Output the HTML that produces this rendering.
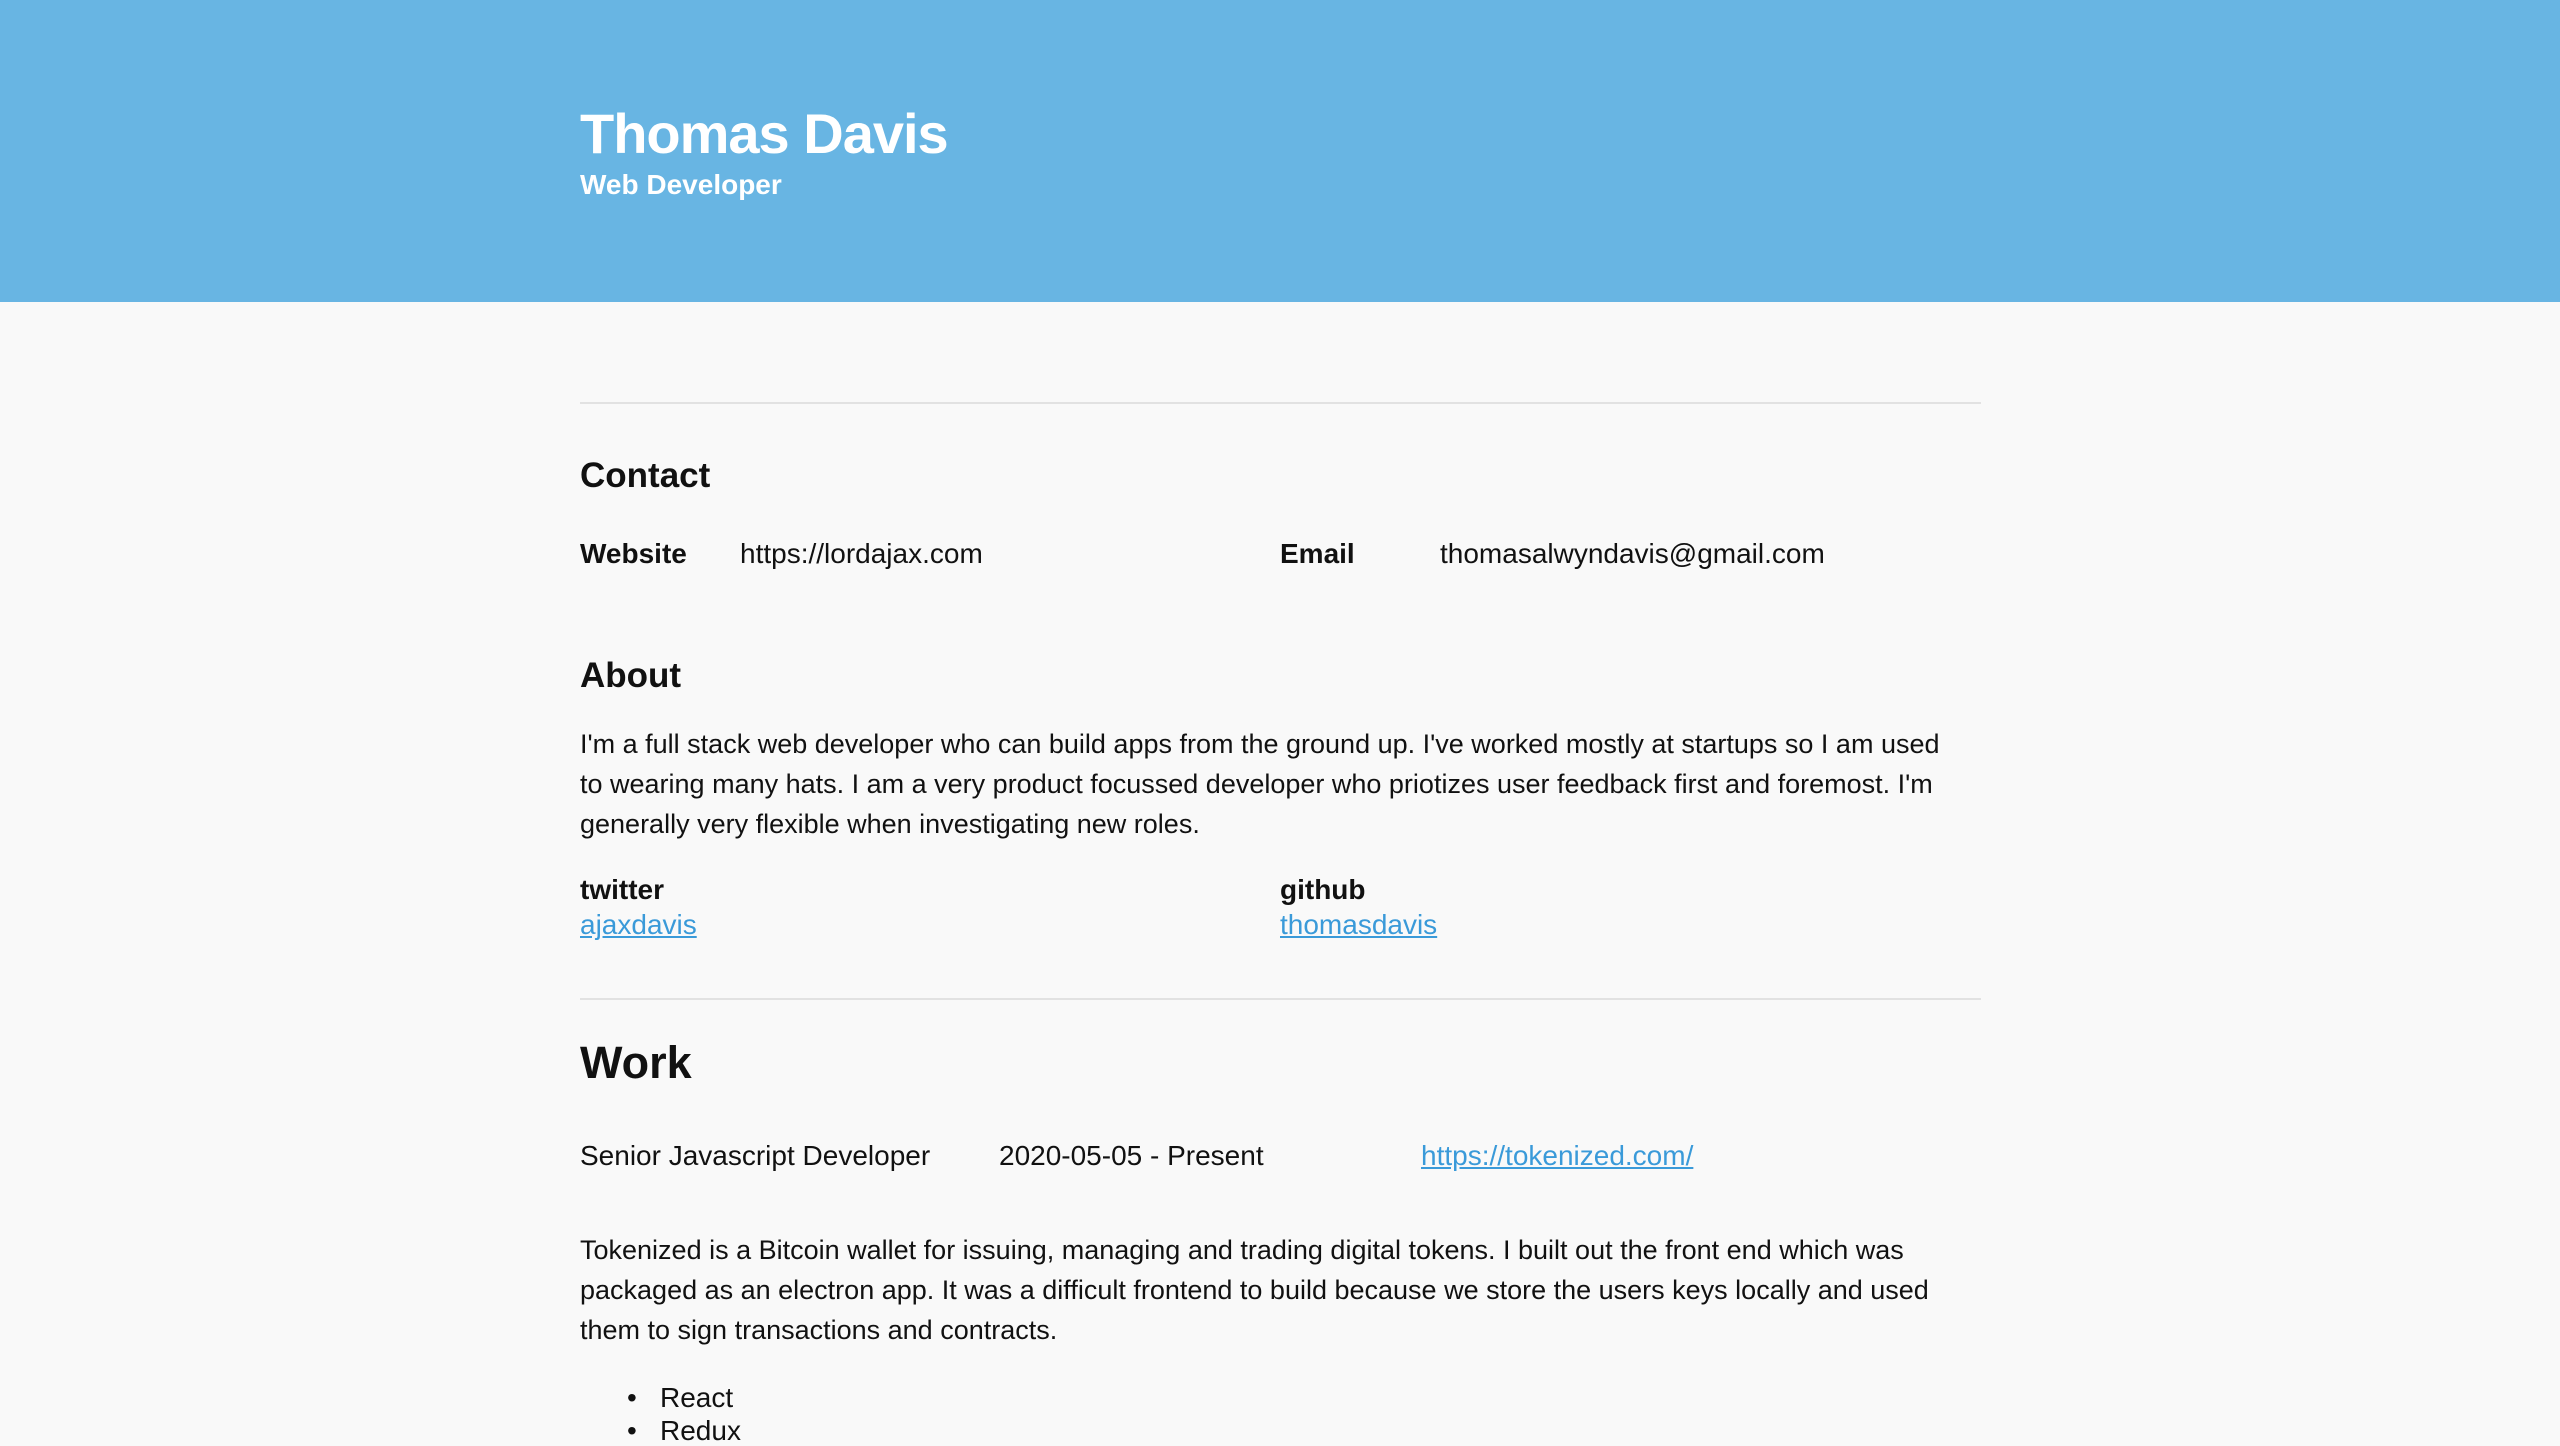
<!DOCTYPE html>
<html><head><meta charset="utf-8"><style>
html,body{margin:0;padding:0;width:2560px;height:1440px;overflow:hidden;background:#f9f9f9;font-family:"Liberation Sans",sans-serif;color:#111}
.a{position:absolute;white-space:nowrap}
.hd{position:absolute;left:0;top:0;width:2560px;height:302px;background:#68b5e3}
.hr{position:absolute;left:580px;width:1401px;height:2px;background:#e2e2e2}
a{color:#3a9ad9;text-decoration:underline}
.t{font-size:28px;line-height:28px}
.p{font-size:27px;line-height:40px}
</style></head><body>
<div class="hd"></div>
<div class="a" style="left:580px;top:106px;font-size:56px;line-height:56px;color:#fff;font-weight:bold;letter-spacing:-1px">Thomas Davis</div>
<div class="a" style="left:580px;top:170px;font-size:28px;line-height:30px;color:#fff;font-weight:bold">Web Developer</div>
<div class="hr" style="top:402px"></div>
<div class="a" style="left:580px;top:458px;font-size:35px;line-height:36px;font-weight:bold">Contact</div>
<div class="a t" style="left:580px;top:540px;font-weight:bold">Website</div>
<div class="a t" style="left:740px;top:540px">https://lordajax.com</div>
<div class="a t" style="left:1280px;top:540px;font-weight:bold">Email</div>
<div class="a t" style="left:1440px;top:540px">thomasalwyndavis@gmail.com</div>
<div class="a" style="left:580px;top:658px;font-size:35px;line-height:36px;font-weight:bold">About</div>
<div class="a p" style="left:580px;top:724px">I'm a full stack web developer who can build apps from the ground up. I've worked mostly at startups so I am used<br>to wearing many hats. I am a very product focussed developer who priotizes user feedback first and foremost. I'm<br>generally very flexible when investigating new roles.</div>
<div class="a t" style="left:580px;top:876px;font-weight:bold">twitter</div>
<div class="a t" style="left:580px;top:911px"><a>ajaxdavis</a></div>
<div class="a t" style="left:1280px;top:876px;font-weight:bold">github</div>
<div class="a t" style="left:1280px;top:911px"><a>thomasdavis</a></div>
<div class="hr" style="top:998px"></div>
<div class="a" style="left:580px;top:1040px;font-size:45px;line-height:46px;font-weight:bold">Work</div>
<div class="a t" style="left:580px;top:1142px">Senior Javascript Developer</div>
<div class="a t" style="left:999px;top:1142px">2020-05-05 - Present</div>
<div class="a t" style="left:1421px;top:1142px"><a>https://tokenized.com/</a></div>
<div class="a p" style="left:580px;top:1230px">Tokenized is a Bitcoin wallet for issuing, managing and trading digital tokens. I built out the front end which was<br>packaged as an electron app. It was a difficult frontend to build because we store the users keys locally and used<br>them to sign transactions and contracts.</div>
<div class="a t" style="left:627px;top:1384px">•</div>
<div class="a t" style="left:660px;top:1384px">React</div>
<div class="a t" style="left:627px;top:1417px">•</div>
<div class="a t" style="left:660px;top:1417px">Redux</div>
</body></html>
